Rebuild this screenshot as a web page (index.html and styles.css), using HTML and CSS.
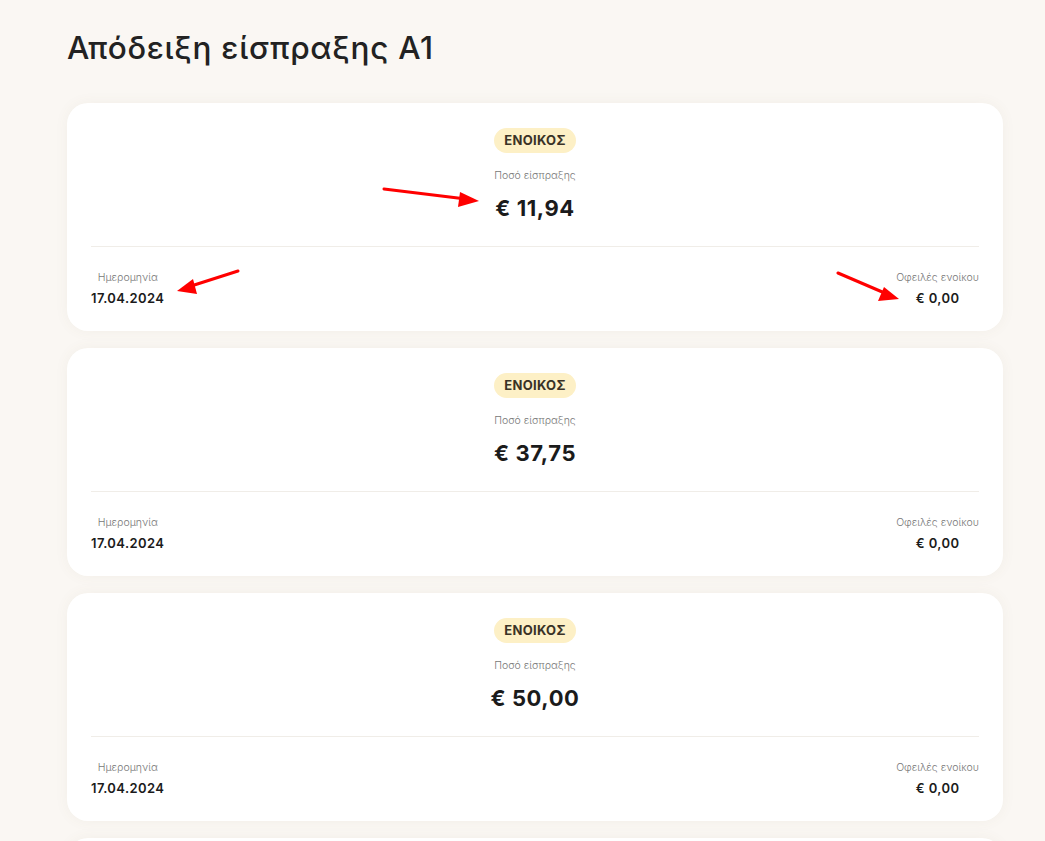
FILE: index.html
```html
<!DOCTYPE html>
<html lang="el">
<head>
<meta charset="utf-8">
<title>Απόδειξη είσπραξης A1</title>
<link rel="stylesheet" href="styles.css">
</head>
<body>
<main class="page">
  <h1 class="title">Απόδειξη είσπραξης A1</h1>
  <div class="list">
    <section class="card">
      <div class="top">
        <span class="badge">ΕΝΟΙΚΟΣ</span>
        <span class="label">Ποσό είσπραξης</span>
        <span class="amount">€ 11,94</span>
      </div>
      <div class="divider"></div>
      <div class="bottom">
        <div class="col"><span class="label">Ημερομηνία</span><span class="value">17.04.2024</span></div>
        <div class="col"><span class="label">Οφειλές ενοίκου</span><span class="value">€ 0,00</span></div>
      </div>
    </section>
    <section class="card">
      <div class="top">
        <span class="badge">ΕΝΟΙΚΟΣ</span>
        <span class="label">Ποσό είσπραξης</span>
        <span class="amount">€ 37,75</span>
      </div>
      <div class="divider"></div>
      <div class="bottom">
        <div class="col"><span class="label">Ημερομηνία</span><span class="value">17.04.2024</span></div>
        <div class="col"><span class="label">Οφειλές ενοίκου</span><span class="value">€ 0,00</span></div>
      </div>
    </section>
    <section class="card">
      <div class="top">
        <span class="badge">ΕΝΟΙΚΟΣ</span>
        <span class="label">Ποσό είσπραξης</span>
        <span class="amount">€ 50,00</span>
      </div>
      <div class="divider"></div>
      <div class="bottom">
        <div class="col"><span class="label">Ημερομηνία</span><span class="value">17.04.2024</span></div>
        <div class="col"><span class="label">Οφειλές ενοίκου</span><span class="value">€ 0,00</span></div>
      </div>
    </section>
    <section class="card card-next"></section>
  </div>
</main>
<svg class="annot" width="1045" height="841" viewBox="0 0 1045 841">
  <g stroke="#f00" stroke-width="3" fill="#f00" stroke-linecap="round">
    <line x1="384" y1="189" x2="466" y2="199"/>
    <polygon points="479,201 460,192 458,207" stroke="none"/>
    <line x1="238" y1="271" x2="188" y2="287"/>
    <polygon points="177,291 193,279 197,294" stroke="none"/>
    <line x1="838" y1="273" x2="887" y2="294"/>
    <polygon points="899,299 884,287 878,301" stroke="none"/>
  </g>
</svg>
</body>
</html>
```

FILE: styles.css
```css
html, body {
  margin: 0;
  padding: 0;
  background: #faf7f3;
  font-family: Inter, "Noto Sans", "Liberation Sans", sans-serif;
  color: #1c1c1c;
  overflow: hidden;
  height: 841px;
}

.page {
  padding: 28px 42px 0 67px;
}

.title {
  margin: 0 0 35px;
  font-size: 31.5px;
  line-height: 40px;
  font-weight: 500;
  letter-spacing: 0.7px;
  color: #222;
}

.list {
  display: flex;
  flex-direction: column;
  gap: 17px;
  width: 936px;
}

.card {
  background: #fff;
  border-radius: 21px;
  padding: 25px 24px 24px;
  box-shadow: 0 0 14px rgba(120, 100, 70, 0.06);
}

.card-next {
  height: 178px;
}

.top {
  display: flex;
  flex-direction: column;
  align-items: center;
}

.badge {
  background: #fdf0c6;
  color: #3a3226;
  font-size: 13px;
  font-weight: 700;
  line-height: 17px;
  padding: 4px 10px;
  border-radius: 13px;
  letter-spacing: 0.3px;
  margin-bottom: 15px;
}

.label {
  font-size: 10.5px;
  line-height: 16px;
  color: #777;
  font-weight: 300;
}

.amount {
  margin-top: 10px;
  font-size: 22px;
  line-height: 28px;
  font-weight: 700;
  letter-spacing: 0.6px;
  color: #1b1b1b;
}

.divider {
  height: 1px;
  background: #f0ede8;
  margin: 24px 0 23px;
}

.bottom {
  display: flex;
  justify-content: space-between;
}

.col {
  display: flex;
  flex-direction: column;
  align-items: center;
  gap: 3px;
}

.value {
  font-size: 13px;
  line-height: 18px;
  font-weight: 600;
  letter-spacing: 0.4px;
  color: #1b1b1b;
}

.annot {
  position: absolute;
  left: 0;
  top: 0;
  pointer-events: none;
}
```
